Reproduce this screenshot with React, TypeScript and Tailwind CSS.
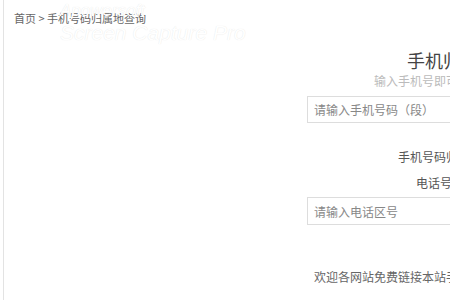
export default function App() {
  return (
    <div
      className="relative h-[300px] w-[450px] overflow-hidden bg-white text-[#555]"
      style={{ fontFamily: '"Noto Sans CJK SC", "Liberation Sans", sans-serif' }}
    >
      {/* watermark overlay */}
      <div
        className="pointer-events-none absolute left-[60px] top-[2px] italic leading-none text-white"
        style={{ fontFamily: '"Liberation Sans", sans-serif', textShadow: "0 0 1px rgba(0,0,0,0.12)" }}
      >
        <div className="text-[17px]">Apowersoft</div>
        <div className="mt-[3px] text-[21px]">Screen Capture Pro</div>
      </div>

      <div className="ml-[3px] flex h-full border-l border-[#e3e3e3]">
        <div className="w-[303px] shrink-0 pl-[10px] pt-[10px]">
          <div className="text-[11px] leading-[16px] text-[#666]">首页 &gt; 手机号码归属地查询</div>
        </div>

        <div className="flex w-[326px] shrink-0 flex-col items-center pt-[49px]">
          <div className="text-[18px] leading-[22px] text-[#444]">手机归属地查询</div>
          <div className="mt-[2px] text-[12px] leading-[16px] text-[#bbb]">输入手机号即可知道手机号码归属地</div>
          <input
            className="mt-[7px] h-[27px] w-full border border-[#ddd] bg-white px-[6px] text-[12px] outline-none placeholder:text-[#888]"
            placeholder="请输入手机号码（段）"
          />
          <div className="mt-[26px] text-[12px] leading-[16px] text-[#555]">手机号码归属地数据库查询</div>
          <div className="mt-[10px] text-[12px] leading-[16px] text-[#555]">电话号码归属地查询</div>
          <input
            className="mt-[6px] h-[28px] w-full border border-[#ddd] bg-white px-[6px] text-[12px] outline-none placeholder:text-[#888]"
            placeholder="请输入电话区号"
          />
          <div className="mt-[44px] whitespace-nowrap text-[12px] leading-[16px] text-[#666]">
            欢迎各网站免费链接本站手机号码归属地查询工具，谢谢！
          </div>
        </div>
      </div>
    </div>
  );
}
